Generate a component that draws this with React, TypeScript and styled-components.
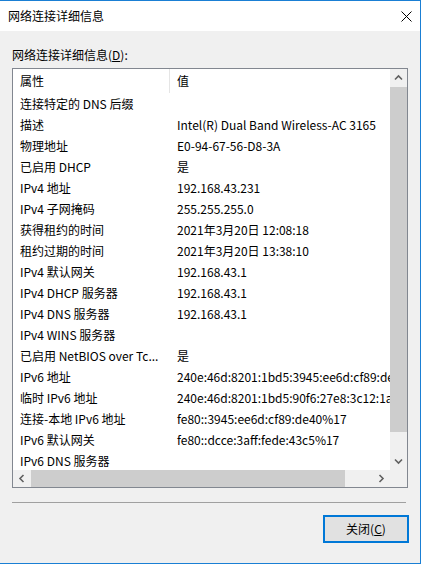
import React from 'react'
import styled, { createGlobalStyle } from 'styled-components'

const GlobalStyle = createGlobalStyle`
  html, body {
    margin: 0;
    padding: 0;
    background: #ffffff;
  }
  body {
    font-family: "Noto Sans CJK SC", "Noto Sans", sans-serif;
    font-size: 12px;
    color: #000;
  }
`

const Window = styled.div`
  box-sizing: border-box;
  width: 421px;
  height: 564px;
  border-top: 1px solid #1a7fd4;
  border-right: 1px solid #1a7fd4;
  border-bottom: 1px solid #1a7fd4;
  display: flex;
  flex-direction: column;
  background: #f0f0f0;
`

const TitleBar = styled.div`
  height: 30px;
  flex: none;
  display: flex;
  align-items: center;
  justify-content: space-between;
  background: #ffffff;
  padding-left: 8px;
`

const Title = styled.span`
  line-height: 30px;
`

const CloseButton = styled.div`
  width: 28px;
  height: 30px;
  display: flex;
  align-items: center;
  justify-content: center;
`

const Body = styled.div`
  flex: 1;
  display: flex;
  flex-direction: column;
  padding: 15px 12px 0 12px;
`

const Label = styled.div`
  line-height: 18px;
  height: 18px;
  margin-bottom: 4px;
`

const ListBox = styled.div`
  box-sizing: border-box;
  width: 396px;
  height: 420px;
  border: 1px solid #828790;
  background: #ffffff;
  display: grid;
  grid-template-columns: 377px 17px;
  grid-template-rows: 401px 17px;
`

const Content = styled.div`
  overflow: hidden;
  background: #ffffff;
`

const HeaderRow = styled.div`
  display: flex;
  height: 24px;
  line-height: 24px;
`

const HeaderCell = styled.div<{ $width: number; $divider?: boolean }>`
  box-sizing: border-box;
  flex: none;
  width: ${p => p.$width}px;
  padding-left: 7px;
  border-right: ${p => (p.$divider ? '1px solid #e5e5e5' : 'none')};
`

const Row = styled.div`
  display: flex;
  height: 21px;
  line-height: 21px;
  white-space: nowrap;
`

const Cell = styled.div<{ $width: number }>`
  box-sizing: border-box;
  flex: none;
  width: ${p => p.$width}px;
  padding-left: 7px;
  overflow: hidden;
  white-space: nowrap;
`

const VScroll = styled.div`
  display: flex;
  flex-direction: column;
  background: #f0f0f0;
`

const HScroll = styled.div`
  display: flex;
  background: #f0f0f0;
`

const ArrowButton = styled.div`
  flex: none;
  width: 17px;
  height: 17px;
  display: flex;
  align-items: center;
  justify-content: center;
`

const Thumb = styled.div<{ $size: number; $vertical?: boolean }>`
  flex: none;
  background: #cdcdcd;
  ${p =>
    p.$vertical
      ? `height: ${p.$size}px; margin-top: 1px;`
      : `width: ${p.$size}px; margin-left: 1px;`}
`

const Track = styled.div`
  flex: 1;
`

const Corner = styled.div`
  background: #f0f0f0;
`

const Separator = styled.div`
  width: 394px;
  height: 0;
  border-top: 1px solid #a0a0a0;
  margin-top: 14px;
`

const Footer = styled.div`
  display: flex;
  justify-content: flex-end;
  padding-top: 12px;
  margin-right: -1px;
`

const PushButton = styled.button`
  box-sizing: border-box;
  width: 86px;
  height: 28px;
  border: 2px solid #0078d7;
  background: #e1e1e1;
  font-family: inherit;
  font-size: 12px;
  color: #000;
  padding: 0;
  line-height: 22px;
`

const Chevron = ({ dir }: { dir: 'up' | 'down' | 'left' | 'right' }) => {
  const rot = { up: 0, right: 90, down: 180, left: 270 }[dir]
  return (
    <svg width="9" height="9" viewBox="0 0 9 9" style={{ transform: `rotate(${rot}deg)` }}>
      <path d="M1 6.5 L4.5 3 L8 6.5" fill="none" stroke="#606060" strokeWidth="1.6" />
    </svg>
  )
}

const rows: [string, string][] = [
  ['连接特定的 DNS 后缀', ''],
  ['描述', 'Intel(R) Dual Band Wireless-AC 3165'],
  ['物理地址', 'E0-94-67-56-D8-3A'],
  ['已启用 DHCP', '是'],
  ['IPv4 地址', '192.168.43.231'],
  ['IPv4 子网掩码', '255.255.255.0'],
  ['获得租约的时间', '2021年3月20日 12:08:18'],
  ['租约过期的时间', '2021年3月20日 13:38:10'],
  ['IPv4 默认网关', '192.168.43.1'],
  ['IPv4 DHCP 服务器', '192.168.43.1'],
  ['IPv4 DNS 服务器', '192.168.43.1'],
  ['IPv4 WINS 服务器', ''],
  ['已启用 NetBIOS over Tc...', '是'],
  ['IPv6 地址', '240e:46d:8201:1bd5:3945:ee6d:cf89:de40'],
  ['临时 IPv6 地址', '240e:46d:8201:1bd5:90f6:27e8:3c12:1a4b'],
  ['连接-本地 IPv6 地址', 'fe80::3945:ee6d:cf89:de40%17'],
  ['IPv6 默认网关', 'fe80::dcce:3aff:fede:43c5%17'],
  ['IPv6 DNS 服务器', ''],
]

const App = () => (
  <>
    <GlobalStyle />
    <Window>
      <TitleBar>
        <Title>网络连接详细信息</Title>
        <CloseButton>
          <svg width="11" height="11" viewBox="0 0 11 11">
            <path d="M0.5 0.5 L10.5 10.5 M10.5 0.5 L0.5 10.5" stroke="#000" strokeWidth="1" />
          </svg>
        </CloseButton>
      </TitleBar>
      <Body>
        <Label>
          网络连接详细信息(<u>D</u>):
        </Label>
        <ListBox>
          <Content>
            <HeaderRow>
              <HeaderCell $width={157} $divider>属性</HeaderCell>
              <HeaderCell $width={300}>值</HeaderCell>
            </HeaderRow>
            {rows.map(([k, v]) => (
              <Row key={k}>
                <Cell $width={157}>{k}</Cell>
                <Cell $width={300}>{v}</Cell>
              </Row>
            ))}
          </Content>
          <VScroll>
            <ArrowButton>
              <Chevron dir="up" />
            </ArrowButton>
            <Thumb $vertical $size={345} />
            <Track />
            <ArrowButton>
              <Chevron dir="down" />
            </ArrowButton>
          </VScroll>
          <HScroll>
            <ArrowButton>
              <Chevron dir="left" />
            </ArrowButton>
            <Thumb $size={314} />
            <Track />
            <ArrowButton>
              <Chevron dir="right" />
            </ArrowButton>
          </HScroll>
          <Corner />
        </ListBox>
        <Separator />
        <Footer>
          <PushButton>
            关闭(<u>C</u>)
          </PushButton>
        </Footer>
      </Body>
    </Window>
  </>
)

export default App
